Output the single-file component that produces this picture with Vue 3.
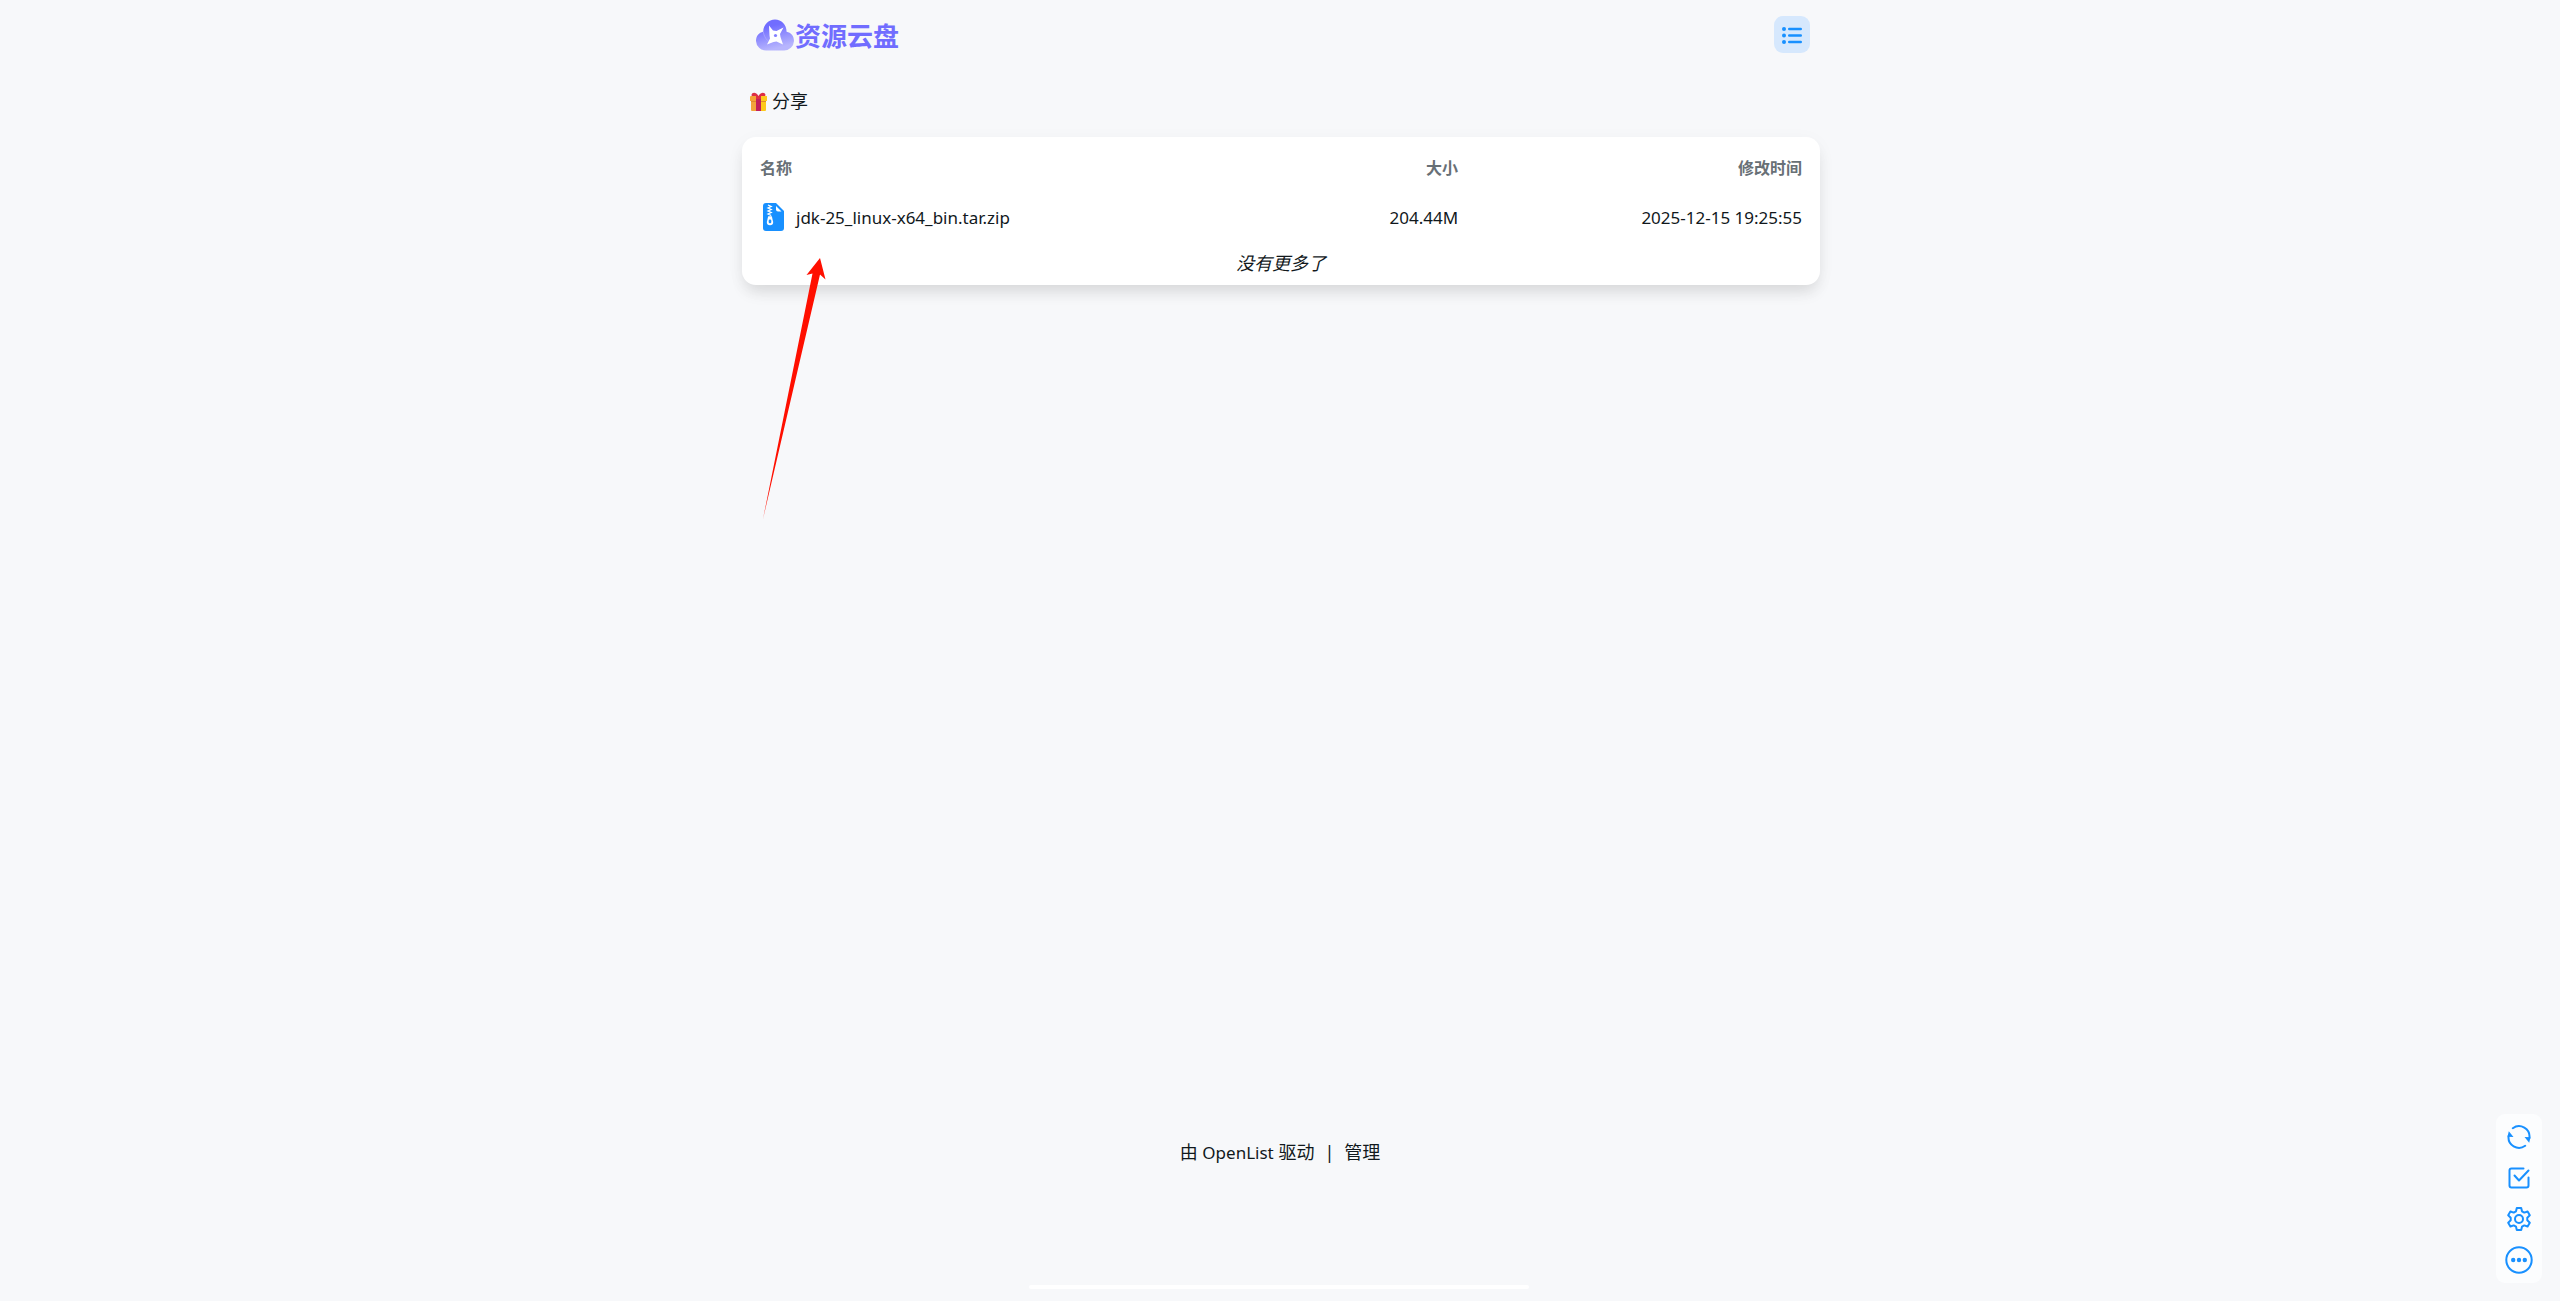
<template>
  <div class="page">
    <div class="content">
      <header class="header">
        <a class="logo" href="#">
          <svg class="logo-mark" viewBox="0 0 38 32" aria-hidden="true">
            <defs>
              <linearGradient id="cloud" x1="0" y1="0" x2="0.3" y2="1">
                <stop offset="0.3" stop-color="#716dff" />
                <stop offset="1" stop-color="#b7b5fd" />
              </linearGradient>
            </defs>
            <path
              fill="url(#cloud)"
              d="M10 31.500a10 10 0 0 1-10-9.500c0-5 3-8.500 7.200-9.300C7.500 5.500 12.500.5 19 .5s11.500 5 11.600 12.200C35 13.500 38 17 38 22a10 10 0 0 1-10 9.500z"
            />
            <path
              fill="none"
              stroke="#a9a7ff"
              stroke-width="0.8"
              d="M7.200 12.700c1.500 7 5 11.300 12 12.300"
            />
            <path
              fill="#fff"
              d="M13 6.500l4 5 3.500.5 7-3.500-3.500 6.500.5 3 2.500 7.500-6.500-3-3 .5-6.500 2.500 3-6-.5-3z"
            />
            <circle cx="19.500" cy="16.500" r="1.600" fill="#8380ff" />
          </svg>
          <span class="logo-text">资源云盘</span>
        </a>
        <button class="layout-btn" type="button" aria-label="列表">
          <svg viewBox="0 0 20 18" fill="#1890ff" aria-hidden="true">
            <circle cx="2" cy="3" r="2" />
            <circle cx="2" cy="9.500" r="2" />
            <circle cx="2" cy="16" r="2" />
            <rect x="6" y="1.700" width="14" height="2.600" rx="1.200" />
            <rect x="6" y="8.200" width="14" height="2.600" rx="1.200" />
            <rect x="6" y="14.700" width="14" height="2.600" rx="1.200" />
          </svg>
        </button>
      </header>

      <nav class="crumbs">
        <a href="#">
          <svg class="gift" viewBox="0 0 17 20" aria-hidden="true">
            <path fill="#dd2e44" d="M8.500 5C6 5 1.500 5 1.500 3 2 0 6-.5 8.500 4 11-.5 15 0 15.500 3c0 2-4.500 2-7 2z" />
            <path fill="#f4a236" d="M0 5q0-1 1-1h15q1 0 1 1v4H0z" />
            <path fill="#fdcb1f" d="M11 4h5q1 0 1 1v4h-6z" />
            <path fill="#f2a53a" d="M1 9h6v10H2q-1 0-1-1z" />
            <path fill="#fdc91c" d="M11 9h5v9q0 1-1 1h-4z" />
            <path fill="#e08a2b" d="M1 9h5v1H1zM11 9h5v1h-5z" />
            <path fill="#c3205a" d="M6 4h5v15H6z" />
            <path fill="#dd2e44" d="M6 4h5v3H6z" />
          </svg>
          <span>分享</span>
        </a>
      </nav>

      <main class="card">
        <table class="files">
          <thead>
            <tr>
              <th class="name">名称</th>
              <th class="size">大小</th>
              <th class="time">修改时间</th>
            </tr>
          </thead>
          <tbody>
            <tr v-for="file in files" :key="file.name">
              <td class="name">
                <a class="file" href="#">
                  <svg class="file-icon" viewBox="0 0 27 28" aria-hidden="true">
                    <path
                      fill="#1890ff"
                      d="M6 0h10l8 8v17q0 3-3 3H6q-3 0-3-3V3q0-3 3-3z"
                    />
                    <path fill="#fff" d="M16 3l5.500 5.500H18q-2 0-2-2z" />
                    <path
                      fill="none"
                      stroke="#fff"
                      stroke-width="1.300"
                      d="M8 2l3.200 1.500L8 5l3.200 1.500L8 8l3.200 1.500L8 11l3.200 1.500"
                    />
                    <path
                      fill="#fff"
                      d="M8.200 13.300h3.600l1.400 5.700q0 3.200-3.200 3.200T6.800 19z"
                    />
                    <rect x="8.700" y="16.500" width="2.600" height="3.800" rx="1.200" fill="#1890ff" />
                  </svg>
                  <span>{{ file.name }}</span>
                </a>
              </td>
              <td class="size">{{ file.size }}</td>
              <td class="time">{{ file.modified }}</td>
            </tr>
          </tbody>
        </table>
        <p class="no-more">没有更多了</p>
      </main>
    </div>

    <footer class="footer">
      <a href="#">由 <span class="latin">OpenList</span> 驱动</a>
      <span>|</span>
      <a href="#">管理</a>
    </footer>

    <div class="toolbar">
      <button type="button" aria-label="刷新">
        <svg viewBox="0 0 28 28" aria-hidden="true">
          <path d="M7.800 5.200A10.500 10.500 0 0 1 24.400 15M20.200 22.800A10.500 10.500 0 0 1 3.600 13" />
          <path class="solid" d="M19.500 14l6 .2-1.300 5.500zM8.500 14l-6-.2 1.300-5.500z" />
        </svg>
      </button>
      <button type="button" aria-label="多选">
        <svg viewBox="0 0 28 28" aria-hidden="true">
          <path d="M18.500 4.500h-12q-2 0-2 2v15q0 2 2 2h15q2 0 2-2v-8" />
          <path d="M9.500 11.500l4.500 5L23.500 6.500" />
        </svg>
      </button>
      <button type="button" aria-label="设置">
        <svg viewBox="0 0 28 28" aria-hidden="true">
          <path
            d="M11.800 3h4.400l.8 3.300 2.300 1.300 3.300-1.100 2.200 3.800-2.500 2.400v2.600l2.500 2.400-2.200 3.800-3.300-1.100-2.300 1.300-.8 3.300h-4.400l-.8-3.300-2.300-1.300-3.300 1.100-2.200-3.800 2.500-2.400v-2.600l-2.500-2.400 2.200-3.800 3.300 1.100L11 6.300z"
          />
          <circle cx="14" cy="14" r="4" />
        </svg>
      </button>
      <button type="button" aria-label="更多">
        <svg viewBox="0 0 28 28" aria-hidden="true">
          <circle cx="14" cy="14" r="12.700" />
          <g class="solid">
            <circle cx="8.200" cy="14" r="2.200" />
            <circle cx="14" cy="14" r="2.200" />
            <circle cx="19.800" cy="14" r="2.200" />
          </g>
        </svg>
      </button>
    </div>

    <div class="bottom-bar"></div>

    <svg class="arrow" viewBox="0 0 66 262" aria-hidden="true">
      <path fill="#ff0f00" d="M58 0L63.500 21.500 58 16.500 1 261 50.500 15.500 44.500 17z" />
    </svg>
  </div>
</template>

<script setup>
import { ref } from 'vue'

const files = ref([
  { name: 'jdk-25_linux-x64_bin.tar.zip', size: '204.44M', modified: '2025-12-15 19:25:55' },
])
</script>

<style>
body {
  margin: 0;
  background: #f7f8fa;
}
</style>

<style scoped>
.page {
  position: relative;
  min-height: 100vh;
  color: #11181c;
  font-family: "Noto Sans", "Noto Sans CJK SC", sans-serif;
  font-size: 18px;
  line-height: 27px;
}
a {
  color: inherit;
  text-decoration: none;
}
button {
  padding: 0;
  border: none;
  cursor: pointer;
}
svg {
  display: block;
}
.content {
  box-sizing: border-box;
  width: 100%;
  max-width: 1080px;
  min-height: 85vh;
  margin: 0 auto;
  padding-left: 2px;
}
.header {
  display: flex;
  align-items: center;
  justify-content: space-between;
  height: 69px;
  padding: 0 10px 0 14px;
}
.logo {
  display: flex;
  align-items: center;
  gap: 1px;
}
.logo-mark {
  width: 38px;
  height: 32px;
}
.logo-text {
  color: #716dff;
  font-family: "Noto Sans CJK SC", sans-serif;
  font-size: 26px;
  font-weight: 700;
  line-height: 32px;
}
.layout-btn {
  display: flex;
  align-items: center;
  justify-content: center;
  width: 36px;
  height: 37px;
  border-radius: 9px;
  background: #d6e8fd;
}
.layout-btn svg {
  width: 20px;
  height: 18px;
}
.crumbs {
  padding: 19px 8px 22px;
}
.crumbs a {
  display: inline-flex;
  align-items: center;
  gap: 5px;
  vertical-align: top;
}
.gift {
  width: 17px;
  height: 20px;
}
.card {
  padding: 9px 18px 8px;
  border-radius: 14px;
  background: #fff;
  box-shadow: 0 10px 15px -3px rgba(0, 0, 0, 0.1), 0 4px 20px -2px rgba(0, 0, 0, 0.05);
}
.files {
  width: 100%;
  border-collapse: collapse;
  table-layout: fixed;
}
.files th,
.files td {
  padding: 0;
  text-align: right;
}
.files th {
  height: 44px;
  color: #687076;
  font-size: 16px;
  font-weight: 700;
}
.files td {
  height: 54px;
  font-size: 17px;
}
.files .name {
  width: 50%;
  text-align: left;
}
.files .size {
  width: 17%;
}
.files .time {
  width: 33%;
}
.file {
  display: flex;
  align-items: center;
  gap: 9px;
}
.file-icon {
  width: 27px;
  height: 28px;
}
.no-more {
  margin: 6px 0 0;
  font-style: italic;
  text-align: center;
}
.footer {
  display: flex;
  justify-content: center;
  gap: 10px;
  padding-top: 33px;
}
.latin {
  font-size: 17px;
}
.toolbar {
  position: fixed;
  right: 18px;
  bottom: 18px;
  display: flex;
  flex-direction: column;
  gap: 13px;
  padding: 9px;
  border-radius: 9px;
  background: #fcfdfe;
}
.toolbar button {
  background: none;
}
.toolbar svg {
  width: 28px;
  height: 28px;
  fill: none;
  stroke: #1890ff;
  stroke-width: 2;
  stroke-linecap: round;
  stroke-linejoin: round;
}
.toolbar .solid {
  fill: #1890ff;
  stroke: none;
}
.bottom-bar {
  position: fixed;
  bottom: 12px;
  left: 50%;
  width: 500px;
  height: 4px;
  margin-left: -251px;
  border-radius: 2px;
  background: #fff;
}
/* pointer laid over the file row */
.arrow {
  position: absolute;
  top: 258px;
  left: 50%;
  width: 66px;
  height: 262px;
  margin-left: -518px;
}
</style>
